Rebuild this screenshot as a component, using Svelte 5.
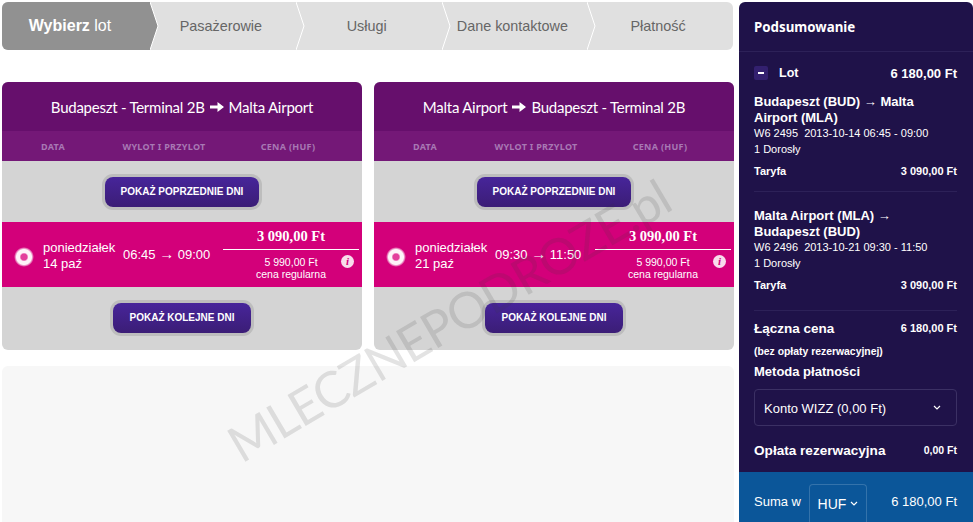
<script>
  const steps = ["Pasażerowie", "Usługi", "Dane kontaktowe", "Płatność"];
  const flights = [
    { from: "Budapeszt - Terminal 2B", to: "Malta Airport", day: "14 paź", dep: "06:45", arr: "09:00" },
    { from: "Malta Airport", to: "Budapeszt - Terminal 2B", day: "21 paź", dep: "09:30", arr: "11:50" },
  ];
  const legs = [
    { route: "Budapeszt (BUD) → Malta Airport (MLA)", info: "W6 2495  2013-10-14 06:45 - 09:00" },
    { route: "Malta Airport (MLA) → Budapeszt (BUD)", info: "W6 2496  2013-10-21 09:30 - 11:50" },
  ];
</script>

<div class="page">
  <main class="content">
    <nav class="steps">
      <div class="step active">
        <span class="label"><b>Wybierz</b> lot</span>
        <svg class="chevron" viewBox="0 0 9 48" aria-hidden="true">
          <path d="M0 0 L8 24 L0 48Z" fill="#919191" />
          <path d="M0 0 L8 24 L0 48" fill="none" stroke="#fff" stroke-width="1" />
        </svg>
      </div>
      {#each steps as step, i}
        <div class="step">
          <span class="label">{step}</span>
          {#if i < steps.length - 1}
            <svg class="chevron" viewBox="0 0 9 48" aria-hidden="true">
              <path d="M0 0 L8 24 L0 48Z" fill="#e0e0e0" />
              <path d="M0 0 L8 24 L0 48" fill="none" stroke="#fff" stroke-width="1" />
            </svg>
          {/if}
        </div>
      {/each}
    </nav>

    <section class="cards">
      {#each flights as f}
        <article class="card">
          <header class="card-title">
            <span>{f.from}</span>
            <svg class="arrow" viewBox="0 0 16 12" aria-hidden="true">
              <path d="M1 4.5H8.5V1L15 6L8.5 11V7.5H1Z" fill="#fff" />
            </svg>
            <span>{f.to}</span>
          </header>
          <div class="columns">
            <span>DATA</span>
            <span>WYLOT I PRZYLOT</span>
            <span>CENA (HUF)</span>
          </div>
          <div class="more">
            <button class="btn">POKAŻ POPRZEDNIE DNI</button>
          </div>
          <div class="row">
            <span class="radio"></span>
            <div class="date">poniedziałek<br />{f.day}</div>
            <div class="time">{f.dep} <span class="to">→</span> {f.arr}</div>
            <div class="price">
              <div class="now">3 090,00 Ft</div>
              <div class="regular">
                <div>5 990,00 Ft</div>
                <div>cena regularna</div>
                <span class="info">i</span>
              </div>
            </div>
          </div>
          <div class="more">
            <button class="btn">POKAŻ KOLEJNE DNI</button>
          </div>
        </article>
      {/each}
    </section>

    <div class="empty"></div>
  </main>

  <aside class="summary">
    <h2>Podsumowanie</h2>
    <div class="body">
      <div class="lot">
        <span class="toggle"></span>
        <span class="lot-name">Lot</span>
        <span class="lot-sum">6 180,00 Ft</span>
      </div>
      {#each legs as leg, i}
        <div class="leg" class:last={i === legs.length - 1}>
          <div class="route">{leg.route}</div>
          <div class="info-line">{leg.info}</div>
          <div class="pax">1 Dorosły</div>
          <div class="fare"><b>Taryfa</b><b>3 090,00 Ft</b></div>
        </div>
      {/each}
      <div class="total">
        <span>Łączna cena</span>
        <b>6 180,00 Ft</b>
      </div>
      <div class="note">(bez opłaty rezerwacyjnej)</div>
      <div class="method">Metoda płatności</div>
      <div class="select">
        <span>Konto WIZZ (0,00 Ft)</span>
        <svg class="caret" viewBox="0 0 8 5" aria-hidden="true"><path d="M1 1L4 4L7 1" /></svg>
      </div>
      <div class="fee">
        <span>Opłata rezerwacyjna</span>
        <b>0,00 Ft</b>
      </div>
    </div>
    <footer class="sum">
      <span class="sum-label">Suma w</span>
      <div class="currency">
        HUF
        <svg class="caret" viewBox="0 0 8 5" aria-hidden="true"><path d="M1 1L4 4L7 1" /></svg>
      </div>
      <span class="sum-value">6 180,00 Ft</span>
    </footer>
  </aside>

  <div class="watermark">MLECZNEPODROZE.pl</div>
</div>

<style>
  :global(body) {
    margin: 0;
    background: #fff;
  }
  .page {
    position: relative;
    width: 973px;
    height: 522px;
    overflow: hidden;
    display: flex;
    font-family: "Liberation Sans", Arial, sans-serif;
    box-sizing: border-box;
    padding: 2px 0 0 2px;
  }
  .content {
    width: 732px;
    display: flex;
    flex-direction: column;
  }
  .steps {
    display: flex;
    height: 48px;
    background: #e0e0e0;
    border-radius: 6px;
    width: 731px;
  }
  .step {
    position: relative;
    flex: 1;
    box-sizing: border-box;
    display: flex;
    align-items: center;
    justify-content: center;
    font-size: 14.4px;
    color: #666;
    padding-right: 4px;
  }
  .step.active {
    flex: 0 0 148px;
    background: #919191;
    color: #fff;
    font-size: 16px;
    border-radius: 6px 0 0 6px;
    padding-right: 12px;
  }
  .chevron {
    position: absolute;
    left: 100%;
    top: 0;
    width: 9px;
    height: 48px;
    z-index: 1;
  }
  .cards {
    display: flex;
    gap: 12px;
    margin-top: 32px;
  }
  .card {
    width: 360px;
    height: 268px;
    border-radius: 6px;
    overflow: hidden;
    background: #d4d4d4;
    display: flex;
    flex-direction: column;
  }
  .card-title {
    height: 49px;
    background: #660f6c;
    color: #fff;
    font-family: Lato, sans-serif;
    font-size: 15px;
    letter-spacing: -0.25px;
    display: flex;
    align-items: center;
    justify-content: center;
    gap: 4px;
  }
  .arrow {
    width: 16px;
    height: 12px;
  }
  .columns {
    height: 30px;
    background: #741877;
    color: #a878b4;
    font-family: "Noto Sans", sans-serif;
    font-size: 9px;
    font-weight: 700;
    letter-spacing: 0.3px;
    display: grid;
    grid-template-columns: 102px 120px 1fr;
    align-items: center;
    text-align: center;
    padding-right: 10px;
  }
  .more {
    height: 61px;
    display: flex;
    align-items: center;
    justify-content: center;
  }
  .btn {
    height: 30px;
    padding: 0 16px;
    border: 0;
    border-radius: 8px;
    background: linear-gradient(#47259a, #3b1d76);
    box-shadow: 0 0 0 3px #bdbdbd;
    color: #fff;
    font-family: "Liberation Sans", Arial, sans-serif;
    font-size: 10px;
    font-weight: 700;
  }
  .row {
    height: 65px;
    background: #d3007a;
    color: #fff;
    display: flex;
    align-items: center;
    padding-left: 12px;
  }
  .radio {
    width: 20px;
    height: 20px;
    margin-top: 4px;
    border-radius: 50%;
    background: radial-gradient(circle, #e33f9c 0 3px, #fdf3f8 4.5px 7.5px, rgba(255, 255, 255, 0) 10px);
    flex: none;
  }
  .date {
    margin-left: 9px;
    margin-top: 3px;
    width: 80px;
    font-size: 13px;
    line-height: 16px;
  }
  .time {
    width: 100px;
    font-size: 13px;
    margin-top: -2px;
  }
  .to {
    font-size: 15px;
    line-height: 1;
  }
  .price {
    width: 136px;
    text-align: center;
    margin-top: -7px;
  }
  .now {
    font-family: "Liberation Serif", serif;
    font-size: 14.5px;
    font-weight: 700;
    height: 27px;
    line-height: 29px;
    border-bottom: 1px solid #fff;
  }
  .regular {
    position: relative;
    font-size: 10.5px;
    line-height: 12px;
    padding-top: 6px;
  }
  .info {
    position: absolute;
    right: 5px;
    top: 5px;
    width: 13px;
    height: 13px;
    border-radius: 50%;
    background: #f8dcec;
    color: #d3007a;
    font: italic 700 11px/13px "Liberation Serif", serif;
  }
  .empty {
    margin-top: 16px;
    flex: 1;
    background: #f7f7f7;
    border-radius: 6px 6px 0 0;
  }
  .summary {
    margin-left: 5px;
    width: 234px;
    background: #1f1249;
    color: #fff;
    border-radius: 6px 6px 0 0;
    display: flex;
    flex-direction: column;
  }
  h2 {
    margin: 0;
    height: 49px;
    line-height: 50px;
    padding-left: 15px;
    font-size: 13.3px;
    font-weight: 700;
    border-bottom: 1px solid #2d2158;
    font-family: "Noto Sans", sans-serif;
  }
  .body {
    flex: 1;
    padding: 0 16px 0 15px;
  }
  .lot {
    display: flex;
    align-items: center;
    height: 20px;
    margin-top: 11px;
    font-size: 12.5px;
    font-weight: 700;
  }
  .toggle {
    position: relative;
    width: 14px;
    height: 14px;
    border-radius: 2px;
    background: #33206f;
    margin-right: 11px;
  }
  .toggle::after {
    content: "";
    position: absolute;
    left: 4px;
    top: 6px;
    width: 6px;
    height: 2px;
    background: #fff;
  }
  .lot-sum {
    margin-left: auto;
    font-size: 13px;
  }
  .leg {
    padding: 11px 0 12px;
    border-bottom: 1px solid #2d2158;
    font-size: 11px;
  }
  .leg + .leg {
    padding-top: 16px;
  }
  .leg.last {
    padding-bottom: 17px;
  }
  .route {
    font-size: 13px;
    font-weight: 700;
    line-height: 16px;
  }
  .info-line {
    white-space: pre;
    line-height: 15px;
  }
  .pax {
    margin-top: 1px;
    line-height: 15px;
  }
  .fare {
    display: flex;
    justify-content: space-between;
    margin-top: 7px;
    line-height: 15px;
  }
  .total {
    display: flex;
    justify-content: space-between;
    margin-top: 9px;
    font-size: 13.5px;
    font-weight: 700;
    line-height: 18px;
  }
  .total b {
    font-size: 11px;
    line-height: 16px;
  }
  .note {
    margin-top: 8px;
    font-size: 10.4px;
    font-weight: 700;
    line-height: 12px;
  }
  .method {
    margin-top: 6px;
    font-size: 13px;
    font-weight: 700;
    line-height: 16px;
  }
  .select {
    margin-top: 9px;
    height: 35px;
    border: 1px solid #3b3064;
    border-radius: 4px;
    display: flex;
    align-items: center;
    justify-content: space-between;
    padding: 0 15px 0 9px;
    font-size: 13px;
  }
  .select span {
    padding-top: 1px;
  }
  .caret {
    width: 8px;
    height: 5px;
    fill: none;
    stroke: #fff;
    stroke-width: 1.2;
  }
  .fee {
    display: flex;
    justify-content: space-between;
    margin-top: 16px;
    font-size: 13.6px;
    font-weight: 700;
    line-height: 18px;
  }
  .fee b {
    font-size: 10.5px;
    line-height: 16px;
  }
  .sum {
    height: 50px;
    background: #0b5699;
    display: flex;
    padding: 0 16px 0 15px;
    font-size: 13px;
    box-sizing: border-box;
  }
  .sum-label,
  .sum-value {
    line-height: 60px;
  }
  .currency {
    align-self: flex-end;
    margin-left: 8px;
    height: 38px;
    width: 58px;
    box-sizing: border-box;
    border: 1px solid #3473ab;
    border-bottom: 0;
    border-radius: 4px 4px 0 0;
    display: flex;
    align-items: center;
    justify-content: center;
    gap: 4px;
    font-size: 14px;
  }
  .sum-value {
    margin-left: auto;
  }
  .watermark {
    position: absolute;
    left: 197px;
    top: 290px;
    transform: rotate(-30.5deg);
    font-family: Lato, sans-serif;
    font-size: 50px;
    letter-spacing: -1px;
    white-space: nowrap;
    color: rgba(60, 60, 60, 0.14);
    pointer-events: none;
    z-index: 5;
  }
</style>
